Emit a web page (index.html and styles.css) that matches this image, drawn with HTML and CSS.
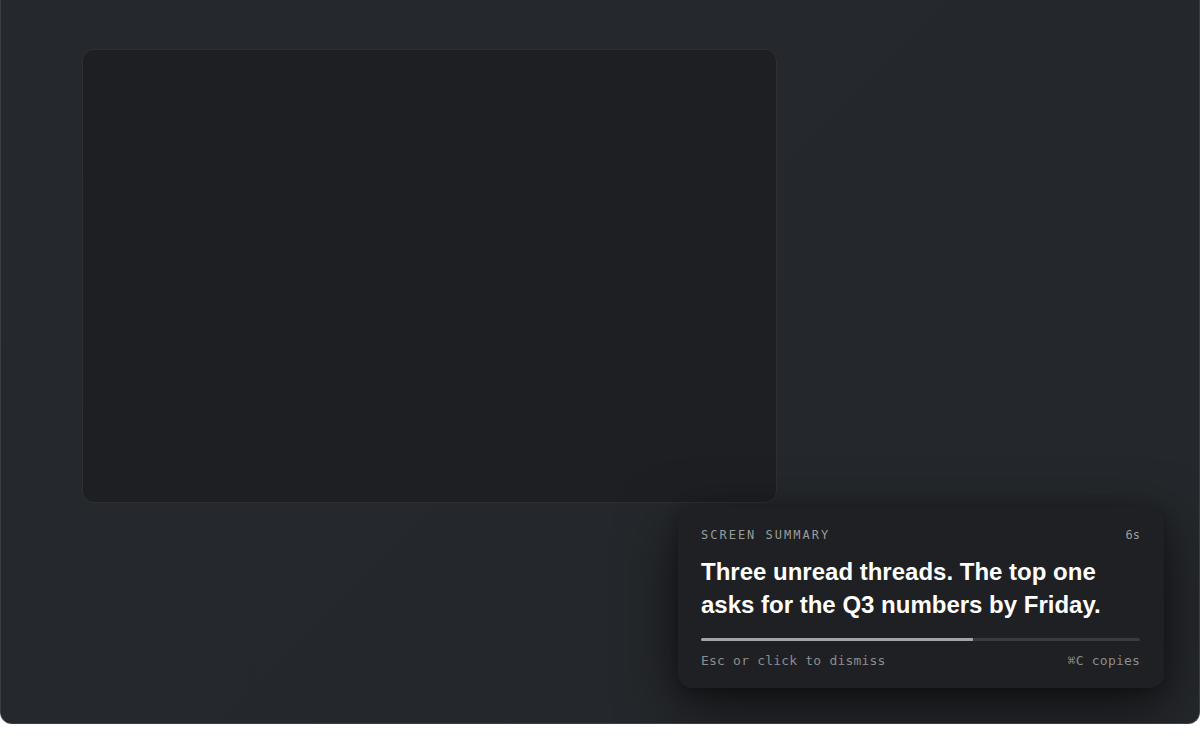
FILE: index.html
```html
<!DOCTYPE html>
<html>
<head>
<meta charset="utf-8">
<link rel="stylesheet" href="styles.css">
</head>
<body>
<div class="screen">
  <div class="window"></div>
  <div class="toast">
    <div class="toast-head">
      <span class="label">SCREEN SUMMARY</span>
      <span class="timer">6s</span>
    </div>
    <p class="summary">Three unread threads. The top one asks for the Q3 numbers by Friday.</p>
    <div class="progress"><div class="progress-fill" style="width:62%"></div></div>
    <div class="toast-foot">
      <span>Esc or click to dismiss</span>
      <span>⌘C copies</span>
    </div>
  </div>
</div>
</body>
</html>
```
FILE: styles.css
```css
html, body {
  margin: 0;
  padding: 0;
  background: #ffffff;
}
.screen {
  position: relative;
  box-sizing: border-box;
  width: 1200px;
  height: 724px;
  background: linear-gradient(135deg, #25282c 0%, #24272b 100%);
  border: 1px solid #3a3d42;
  border-top: none;
  border-radius: 0 0 12px 12px;
  padding: 49px 0 0 81px;
  overflow: hidden;
}
.window {
  box-sizing: border-box;
  width: 695px;
  height: 454px;
  background: #1e1f23;
  border: 1px solid #2e3035;
  border-radius: 12px;
}
.toast {
  position: absolute;
  left: 677px;
  top: 507px;
  box-sizing: border-box;
  width: 486px;
  padding: 20px 24px 19px 23px;
  background: #1f2023;
  border-radius: 14px;
  box-shadow: 0 20px 60px rgba(0, 0, 0, 0.55), 0 4px 16px rgba(0, 0, 0, 0.3);
}
.toast-head {
  display: flex;
  justify-content: space-between;
  font-family: "DejaVu Sans Mono", "Liberation Mono", monospace;
  font-size: 12px;
  line-height: 16px;
  color: #9b9c9e;
}
.label {
  letter-spacing: 2px;
}
.summary {
  margin: 12px 0 0 0;
  font-family: "Liberation Sans", Arial, sans-serif;
  font-weight: bold;
  font-size: 24px;
  line-height: 33px;
  color: #ffffff;
}
.progress {
  margin-top: 17px;
  height: 3px;
  background: #3a3b3f;
  border-radius: 2px;
  overflow: hidden;
}
.progress-fill {
  height: 100%;
  background: #a3a4a6;
}
.toast-foot {
  margin-top: 12px;
  display: flex;
  justify-content: space-between;
  font-family: "DejaVu Sans Mono", "Liberation Mono", monospace;
  font-size: 13px;
  line-height: 16px;
  letter-spacing: 0.2px;
  color: #8c8d90;
}
```
